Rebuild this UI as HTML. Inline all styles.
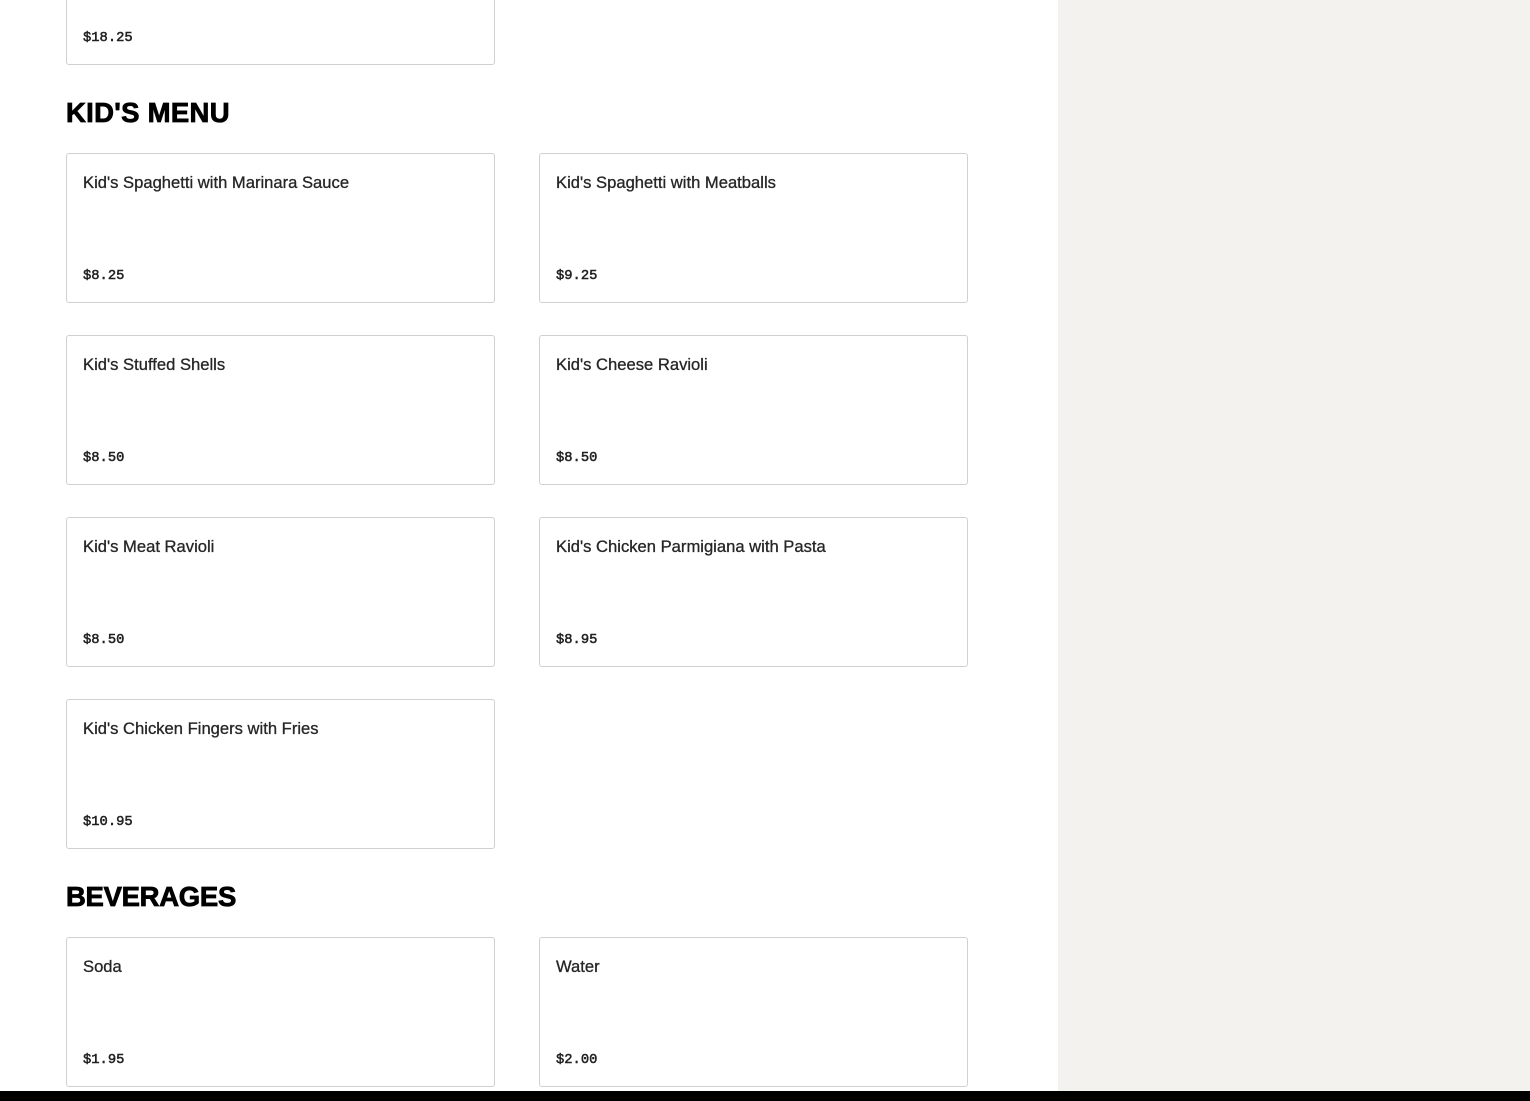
<!DOCTYPE html>
<html><head><style>
*{margin:0;padding:0;box-sizing:border-box}
body{width:1530px;height:1101px;position:relative;background:#fff;overflow:hidden;font-family:"Liberation Sans",sans-serif}
.side{position:absolute;left:1058px;top:0;width:472px;height:1091px;background:#f3f2ef}
.bar{position:absolute;left:0;top:1091px;width:1530px;height:10px;background:#000}
.card{position:absolute;width:429px;height:150px;border:1px solid #d0d0d0;border-radius:3px;background:#fff}
.card .t{position:absolute;left:16px;top:19px;font-size:16.6px;color:#262626;-webkit-text-stroke:0.3px #262626}
.card .p{position:absolute;left:16px;top:115px;font-family:"Liberation Mono",monospace;font-size:13.8px;color:#222;-webkit-text-stroke:0.5px #222}
h2{position:absolute;left:66px;font-size:27.5px;font-weight:900;color:#000;-webkit-text-stroke:0.8px #000}
</style></head><body>
<div class="side"></div>
<div class="card" style="left:66px;top:-85px"><div class="t">&nbsp;</div><div class="p">$18.25</div></div>
<h2 style="top:97px;letter-spacing:0.3px">KID'S MENU</h2>
<div class="card" style="left:66px;top:153px"><div class="t">Kid's Spaghetti with Marinara Sauce</div><div class="p">$8.25</div></div>
<div class="card" style="left:539px;top:153px"><div class="t">Kid's Spaghetti with Meatballs</div><div class="p">$9.25</div></div>
<div class="card" style="left:66px;top:335px"><div class="t">Kid's Stuffed Shells</div><div class="p">$8.50</div></div>
<div class="card" style="left:539px;top:335px"><div class="t">Kid's Cheese Ravioli</div><div class="p">$8.50</div></div>
<div class="card" style="left:66px;top:517px"><div class="t">Kid's Meat Ravioli</div><div class="p">$8.50</div></div>
<div class="card" style="left:539px;top:517px"><div class="t">Kid's Chicken Parmigiana with Pasta</div><div class="p">$8.95</div></div>
<div class="card" style="left:66px;top:699px"><div class="t">Kid's Chicken Fingers with Fries</div><div class="p">$10.95</div></div>
<h2 style="top:881px;letter-spacing:-0.3px">BEVERAGES</h2>
<div class="card" style="left:66px;top:937px"><div class="t">Soda</div><div class="p">$1.95</div></div>
<div class="card" style="left:539px;top:937px"><div class="t">Water</div><div class="p">$2.00</div></div>
<div class="bar"></div>
</body></html>
